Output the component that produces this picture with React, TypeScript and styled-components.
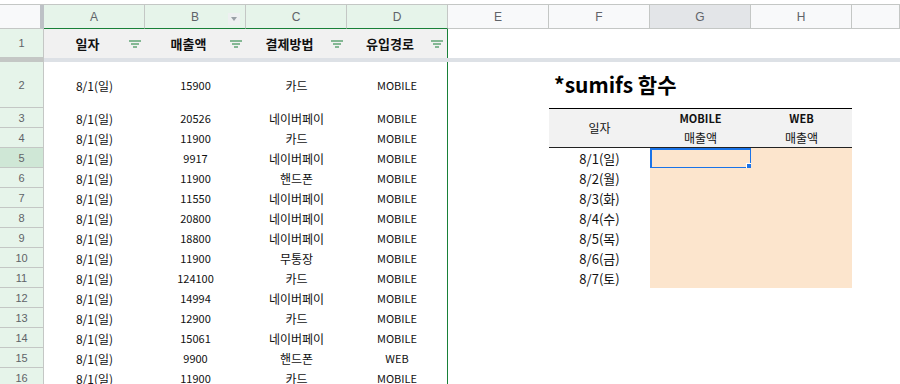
import React from "react";
import styled, { createGlobalStyle, css } from "styled-components";

const Global = createGlobalStyle`
  html, body { margin: 0; padding: 0; background: #fff; }
  body { font-family: "Noto Sans CJK KR", "Noto Sans", sans-serif; overflow: hidden; }
`;

const KR = `"Noto Sans CJK KR", "Noto Sans", sans-serif`;
const UI = `"Liberation Sans", Arial, sans-serif`;
const GREEN = "#188038";
const GRID = "#c4c7c5";

const TopStrip = styled.div`
  height: 5px;
  box-sizing: border-box;
  border-bottom: 1px solid ${GRID};
  background: #fff;
`;

const Sheet = styled.div`
  display: grid;
  grid-template-columns: 44px repeat(8, 101px) 1fr;
  grid-template-rows: 24px 29px 4px 46px repeat(14, 20px);
  width: 900px;
`;

const Corner = styled.div`
  box-sizing: border-box;
  background: #f8f9fa;
  border-right: 4px solid #bdc1c6;
  border-bottom: 1px solid ${GRID};
`;

const ColHead = styled.div<{ $tone: "green" | "plain" | "sel"; $filterEdge?: boolean }>`
  box-sizing: border-box;
  position: relative;
  display: flex;
  align-items: center;
  justify-content: center;
  font-family: ${UI};
  font-size: 12px;
  color: #5f6368;
  border-right: 1px solid ${GRID};
  border-bottom: 1px solid ${GRID};
  background: ${(p) => (p.$tone === "green" ? "#e6f4ea" : p.$tone === "sel" ? "#e3e5e8" : "#f8f9fa")};
  ${(p) => p.$filterEdge && css`border-bottom-color: ${GREEN};`}
`;

const DropBox = styled.span`
  position: absolute;
  right: 5px;
  top: 8px;
  width: 12px;
  height: 12px;
  background: #eef0f1;
  display: flex;
  align-items: center;
  justify-content: center;
  &::after {
    content: "";
    border-left: 3.5px solid transparent;
    border-right: 3.5px solid transparent;
    border-top: 4px solid #9aa0a6;
  }
`;

const RowHead = styled.div<{ $sel?: boolean }>`
  box-sizing: border-box;
  display: flex;
  align-items: center;
  justify-content: center;
  font-family: ${UI};
  font-size: 11px;
  color: #5f6368;
  background: ${(p) => (p.$sel ? "#cfe7d6" : "#e6f4ea")};
  border-right: 1px solid ${GRID};
  border-bottom: 1px solid ${GRID};
`;

const FilterCell = styled.div<{ $last?: boolean }>`
  box-sizing: border-box;
  display: flex;
  align-items: center;
  background: #f1f1f1;
  ${(p) => p.$last && css`border-right: 1px solid ${GREEN};`}
`;

const FilterLabel = styled.span`
  flex: 1;
  text-align: center;
  font-family: ${KR};
  font-weight: 700;
  font-size: 13px;
  color: #111;
  padding-left: 2px;
`;

const FilterIcon = () => (
  <svg width="12" height="8" viewBox="0 0 12 8" style={{ marginRight: 4 }}>
    <rect x="0" y="0.5" width="12" height="1" fill={GREEN} />
    <rect x="2" y="3.5" width="8" height="1" fill={GREEN} />
    <rect x="4" y="6.5" width="4" height="1" fill={GREEN} />
  </svg>
);

const FreezeHead = styled.div`
  background: #c4c7c5;
`;
const FreezeBar = styled.div`
  grid-column: 2 / -1;
  background: #dde1e6;
`;

const Cell = styled.div<{ $edge?: boolean; $fill?: boolean; $size?: number; $align?: string }>`
  box-sizing: border-box;
  position: relative;
  display: flex;
  align-items: center;
  justify-content: ${(p) => p.$align ?? "center"};
  font-family: ${KR};
  font-size: ${(p) => p.$size ?? 12}px;
  color: #111;
  white-space: nowrap;
  background: ${(p) => (p.$fill ? "#fce5cd" : "#fff")};
  ${(p) => p.$edge && css`border-right: 1px solid ${GREEN};`}
`;

const Title = styled.div`
  box-sizing: border-box;
  display: flex;
  align-items: center;
  padding-left: 5px;
  padding-bottom: 2px;
  font-family: ${KR};
  font-weight: 700;
  font-size: 21px;
  color: #000;
  white-space: nowrap;
  overflow: visible;
  z-index: 1;
`;

const HeadCell = styled.div`
  grid-row: span 2;
  box-sizing: border-box;
  display: flex;
  flex-direction: column;
  align-items: center;
  justify-content: center;
  background: #f2f2f2;
  border-top: 1px solid #000;
  border-bottom: 1px solid #222;
  font-family: ${KR};
  font-size: 12px;
  color: #111;
  line-height: 20px;
`;

const HeadTop = styled.span`
  font-weight: 700;
  font-size: 11px;
`;

const Selection = styled.div`
  position: absolute;
  inset: 0 -1px -1px 0;
  border: 2px solid #1a73e8;
  pointer-events: none;
  &::after {
    content: "";
    position: absolute;
    right: -4px;
    bottom: -4px;
    width: 6px;
    height: 6px;
    background: #1a73e8;
    border: 1px solid #fff;
  }
`;

const rows: [string, string, string][] = [
  ["15900", "카드", "MOBILE"],
  ["20526", "네이버페이", "MOBILE"],
  ["11900", "카드", "MOBILE"],
  ["9917", "네이버페이", "MOBILE"],
  ["11900", "핸드폰", "MOBILE"],
  ["11550", "네이버페이", "MOBILE"],
  ["20800", "네이버페이", "MOBILE"],
  ["18800", "네이버페이", "MOBILE"],
  ["11900", "무통장", "MOBILE"],
  ["124100", "카드", "MOBILE"],
  ["14994", "네이버페이", "MOBILE"],
  ["12900", "카드", "MOBILE"],
  ["15061", "네이버페이", "MOBILE"],
  ["9900", "핸드폰", "WEB"],
  ["11900", "카드", "MOBILE"],
];

const dates = ["8/1(일)", "8/2(월)", "8/3(화)", "8/4(수)", "8/5(목)", "8/6(금)", "8/7(토)"];

const colLetters = ["A", "B", "C", "D", "E", "F", "G", "H", ""];

export default function App() {
  const body: React.ReactNode[] = [];
  rows.forEach((r, i) => {
    const rowNum = i + 2;
    body.push(<RowHead key={`rh${rowNum}`} $sel={rowNum === 5}>{rowNum}</RowHead>);
    body.push(<Cell key={`a${rowNum}`}>8/1(일)</Cell>);
    body.push(<Cell key={`b${rowNum}`} $size={11}>{r[0]}</Cell>);
    body.push(<Cell key={`c${rowNum}`}>{r[1]}</Cell>);
    body.push(<Cell key={`d${rowNum}`} $edge $size={11}>{r[2]}</Cell>);
    body.push(<Cell key={`e${rowNum}`} />);
    if (rowNum === 2) {
      body.push(<Title key="title">*sumifs 함수</Title>);
      body.push(<Cell key="g2" />);
      body.push(<Cell key="h2" />);
    } else if (rowNum === 3) {
      body.push(<HeadCell key="f3">일자</HeadCell>);
      body.push(
        <HeadCell key="g3">
          <HeadTop>MOBILE</HeadTop>
          <span>매출액</span>
        </HeadCell>
      );
      body.push(
        <HeadCell key="h3">
          <HeadTop>WEB</HeadTop>
          <span>매출액</span>
        </HeadCell>
      );
    } else if (rowNum >= 5 && rowNum <= 11) {
      body.push(<Cell key={`f${rowNum}`} $size={13}>{dates[rowNum - 5]}</Cell>);
      body.push(
        <Cell key={`g${rowNum}`} $fill>
          {rowNum === 5 && <Selection />}
        </Cell>
      );
      body.push(<Cell key={`h${rowNum}`} $fill />);
    } else if (rowNum !== 4) {
      body.push(<Cell key={`f${rowNum}`} />);
      body.push(<Cell key={`g${rowNum}`} />);
      body.push(<Cell key={`h${rowNum}`} />);
    }
    body.push(<Cell key={`i${rowNum}`} />);
  });

  return (
    <>
      <Global />
      <TopStrip />
      <Sheet>
        <Corner />
        {colLetters.map((l, i) => (
          <ColHead
            key={`ch${i}`}
            $tone={i < 4 ? "green" : l === "G" ? "sel" : "plain"}
            $filterEdge={i < 4}
          >
            {l}
            {l === "B" && <DropBox />}
          </ColHead>
        ))}

        <RowHead>1</RowHead>
        {["일자", "매출액", "결제방법", "유입경로"].map((t, i) => (
          <FilterCell key={`f1${i}`} $last={i === 3}>
            <FilterLabel>{t}</FilterLabel>
            <FilterIcon />
          </FilterCell>
        ))}
        {[0, 1, 2, 3, 4].map((i) => (
          <Cell key={`r1${i}`} />
        ))}

        <FreezeHead />
        <FreezeBar />

        {body}
      </Sheet>
    </>
  );
}
